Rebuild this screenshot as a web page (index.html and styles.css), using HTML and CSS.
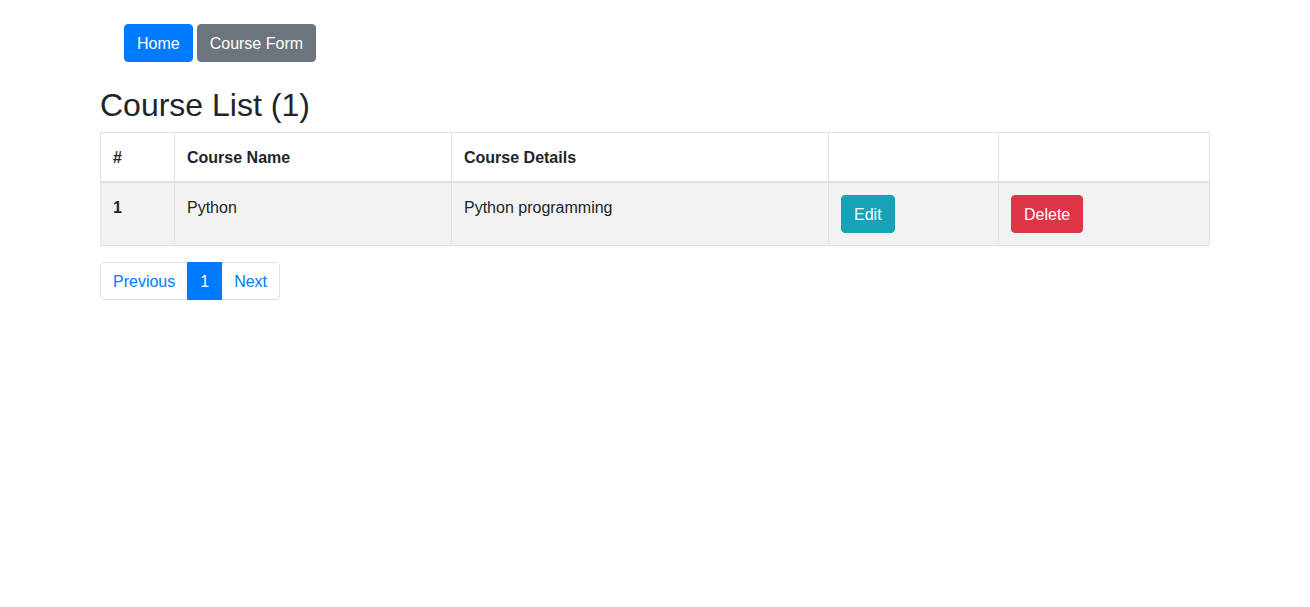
FILE: index.html
```html
<!DOCTYPE html>
<html lang="en">
<head>
<meta charset="utf-8">
<title>Course List</title>
<link rel="stylesheet" href="styles.css">
</head>
<body>
<div class="container">
  <nav class="nav">
    <a class="btn btn-primary" href="#">Home</a>
    <a class="btn btn-secondary" href="#">Course Form</a>
  </nav>
  <h2 class="title">Course List (1)</h2>
  <table class="table">
    <thead>
      <tr>
        <th class="c-num">#</th>
        <th class="c-name">Course Name</th>
        <th class="c-details">Course Details</th>
        <th class="c-edit"></th>
        <th class="c-del"></th>
      </tr>
    </thead>
    <tbody>
      <tr class="odd">
        <th>1</th>
        <td>Python</td>
        <td>Python programming</td>
        <td class="c-btn"><a class="btn btn-info" href="#">Edit</a></td>
        <td class="c-btn"><a class="btn btn-danger" href="#">Delete</a></td>
      </tr>
    </tbody>
  </table>
  <ul class="pagination">
    <li class="page-item"><a class="page-link first" href="#">Previous</a></li>
    <li class="page-item"><a class="page-link active" href="#">1</a></li>
    <li class="page-item"><a class="page-link last" href="#">Next</a></li>
  </ul>
</div>
</body>
</html>
```
FILE: styles.css
```css
* { box-sizing: border-box; }
body {
  margin: 0;
  font-family: "Liberation Sans", Arial, sans-serif;
  font-size: 16px;
  line-height: 1.5;
  color: #212529;
  background: #fff;
}
.container {
  max-width: 1140px;
  margin: 0 auto;
  padding: 0 15px;
}
.nav {
  display: flex;
  gap: 4px;
  padding: 24px 0 0 24px;
}
.btn {
  display: inline-block;
  padding: 7px 12px 5px;
  font-size: 16px;
  line-height: 24px;
  border: 1px solid transparent;
  border-radius: 4px;
  color: #fff;
  text-decoration: none;
}
.btn-primary { background: #007bff; border-color: #007bff; }
.btn-secondary { background: #6c757d; border-color: #6c757d; }
.btn-info { background: #17a2b8; border-color: #17a2b8; }
.btn-danger { background: #dc3545; border-color: #dc3545; }
.title {
  margin: 24px 0 8px;
  font-size: 32px;
  font-weight: 500;
  line-height: 1.2;
}
.table {
  width: 100%;
  border-collapse: collapse;
  margin-bottom: 16px;
  border: 1px solid #dee2e6;
}
.table th, .table td {
  padding: 13px 12px 11px;
  border: 1px solid #dee2e6;
  vertical-align: top;
  text-align: left;
}
.table td.c-btn { padding: 12px; }
.table thead th {
  border-bottom: 2px solid #dee2e6;
  vertical-align: bottom;
  font-weight: 700;
}
.table tbody th { font-weight: 700; }
.table tr.odd { background: #f2f2f2; }
.c-num { width: 74px; }
.c-name { width: 277px; }
.c-details { width: 377px; }
.c-edit { width: 170px; }
.pagination {
  display: flex;
  list-style: none;
  margin: 0;
  padding: 0;
}
.page-link {
  display: block;
  padding: 9px 12px 7px;
  line-height: 20px;
  color: #007bff;
  text-decoration: none;
  border: 1px solid #dee2e6;
  margin-left: -1px;
  background: #fff;
}
.page-link.first { margin-left: 0; border-radius: 4px 0 0 4px; }
.page-link.last { border-radius: 0 4px 4px 0; }
.page-link.active { background: #007bff; border-color: #007bff; color: #fff; position: relative; }
```
